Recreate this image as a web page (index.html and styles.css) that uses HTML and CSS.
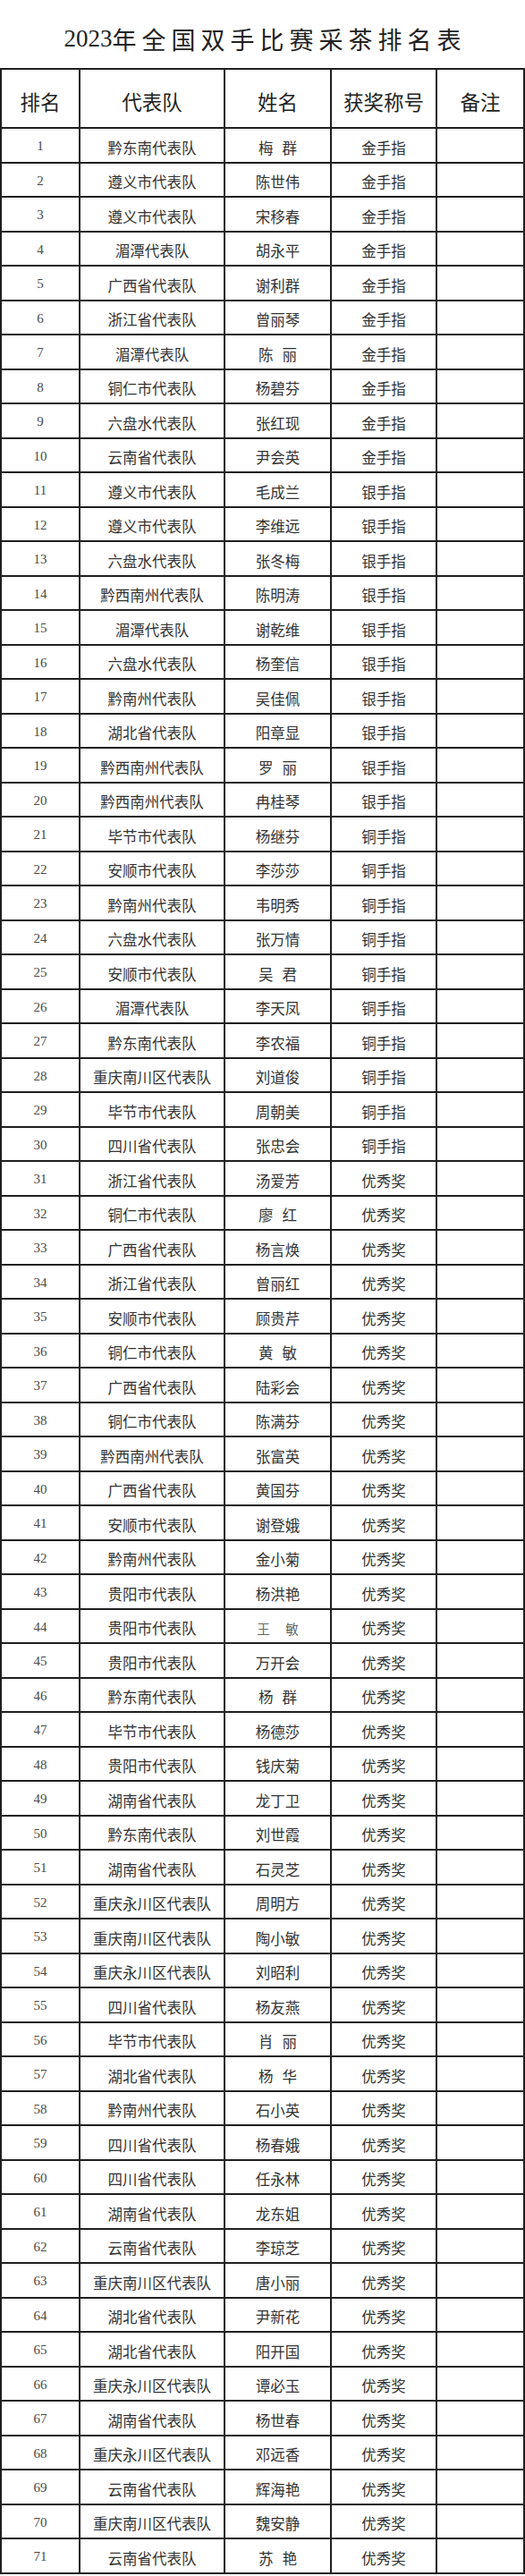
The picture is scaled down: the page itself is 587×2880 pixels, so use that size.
FILE: index.html
```html
<!DOCTYPE html>
<html lang="zh-CN">
<head>
<meta charset="utf-8">
<title>2023年全国双手比赛采茶排名表</title>
<link rel="stylesheet" href="styles.css">
</head>
<body>
<div class="page">
  <h1 class="title"><span class="yr">2023</span>年全国双手比赛采茶排名表</h1>
  <div class="sheet">
    <div class="h">排名</div><div class="h">代表队</div><div class="h">姓名</div><div class="h">获奖称号</div><div class="h">备注</div>

    <div class="n">1</div><div class="c">黔东南代表队</div><div class="c nm">梅 群</div><div class="c">金手指</div><div class="c"></div>
    <div class="n">2</div><div class="c">遵义市代表队</div><div class="c">陈世伟</div><div class="c">金手指</div><div class="c"></div>
    <div class="n">3</div><div class="c">遵义市代表队</div><div class="c">宋移春</div><div class="c">金手指</div><div class="c"></div>
    <div class="n">4</div><div class="c">湄潭代表队</div><div class="c">胡永平</div><div class="c">金手指</div><div class="c"></div>
    <div class="n">5</div><div class="c">广西省代表队</div><div class="c">谢利群</div><div class="c">金手指</div><div class="c"></div>
    <div class="n">6</div><div class="c">浙江省代表队</div><div class="c">曾丽琴</div><div class="c">金手指</div><div class="c"></div>
    <div class="n">7</div><div class="c">湄潭代表队</div><div class="c nm">陈 丽</div><div class="c">金手指</div><div class="c"></div>
    <div class="n">8</div><div class="c">铜仁市代表队</div><div class="c">杨碧芬</div><div class="c">金手指</div><div class="c"></div>
    <div class="n">9</div><div class="c">六盘水代表队</div><div class="c">张红现</div><div class="c">金手指</div><div class="c"></div>
    <div class="n">10</div><div class="c">云南省代表队</div><div class="c">尹会英</div><div class="c">金手指</div><div class="c"></div>
    <div class="n">11</div><div class="c">遵义市代表队</div><div class="c">毛成兰</div><div class="c">银手指</div><div class="c"></div>
    <div class="n">12</div><div class="c">遵义市代表队</div><div class="c">李维远</div><div class="c">银手指</div><div class="c"></div>
    <div class="n">13</div><div class="c">六盘水代表队</div><div class="c">张冬梅</div><div class="c">银手指</div><div class="c"></div>
    <div class="n">14</div><div class="c">黔西南州代表队</div><div class="c">陈明涛</div><div class="c">银手指</div><div class="c"></div>
    <div class="n">15</div><div class="c">湄潭代表队</div><div class="c">谢乾维</div><div class="c">银手指</div><div class="c"></div>
    <div class="n">16</div><div class="c">六盘水代表队</div><div class="c">杨奎信</div><div class="c">银手指</div><div class="c"></div>
    <div class="n">17</div><div class="c">黔南州代表队</div><div class="c">吴佳佩</div><div class="c">银手指</div><div class="c"></div>
    <div class="n">18</div><div class="c">湖北省代表队</div><div class="c">阳章显</div><div class="c">银手指</div><div class="c"></div>
    <div class="n">19</div><div class="c">黔西南州代表队</div><div class="c nm">罗 丽</div><div class="c">银手指</div><div class="c"></div>
    <div class="n">20</div><div class="c">黔西南州代表队</div><div class="c">冉桂琴</div><div class="c">银手指</div><div class="c"></div>
    <div class="n">21</div><div class="c">毕节市代表队</div><div class="c">杨继芬</div><div class="c">铜手指</div><div class="c"></div>
    <div class="n">22</div><div class="c">安顺市代表队</div><div class="c">李莎莎</div><div class="c">铜手指</div><div class="c"></div>
    <div class="n">23</div><div class="c">黔南州代表队</div><div class="c">韦明秀</div><div class="c">铜手指</div><div class="c"></div>
    <div class="n">24</div><div class="c">六盘水代表队</div><div class="c">张万情</div><div class="c">铜手指</div><div class="c"></div>
    <div class="n">25</div><div class="c">安顺市代表队</div><div class="c nm">吴 君</div><div class="c">铜手指</div><div class="c"></div>
    <div class="n">26</div><div class="c">湄潭代表队</div><div class="c">李天凤</div><div class="c">铜手指</div><div class="c"></div>
    <div class="n">27</div><div class="c">黔东南代表队</div><div class="c">李农福</div><div class="c">铜手指</div><div class="c"></div>
    <div class="n">28</div><div class="c">重庆南川区代表队</div><div class="c">刘道俊</div><div class="c">铜手指</div><div class="c"></div>
    <div class="n">29</div><div class="c">毕节市代表队</div><div class="c">周朝美</div><div class="c">铜手指</div><div class="c"></div>
    <div class="n">30</div><div class="c">四川省代表队</div><div class="c">张忠会</div><div class="c">铜手指</div><div class="c"></div>
    <div class="n">31</div><div class="c">浙江省代表队</div><div class="c">汤爱芳</div><div class="c">优秀奖</div><div class="c"></div>
    <div class="n">32</div><div class="c">铜仁市代表队</div><div class="c nm">廖 红</div><div class="c">优秀奖</div><div class="c"></div>
    <div class="n">33</div><div class="c">广西省代表队</div><div class="c">杨言焕</div><div class="c">优秀奖</div><div class="c"></div>
    <div class="n">34</div><div class="c">浙江省代表队</div><div class="c">曾丽红</div><div class="c">优秀奖</div><div class="c"></div>
    <div class="n">35</div><div class="c">安顺市代表队</div><div class="c">顾贵芹</div><div class="c">优秀奖</div><div class="c"></div>
    <div class="n">36</div><div class="c">铜仁市代表队</div><div class="c nm">黄 敏</div><div class="c">优秀奖</div><div class="c"></div>
    <div class="n">37</div><div class="c">广西省代表队</div><div class="c">陆彩会</div><div class="c">优秀奖</div><div class="c"></div>
    <div class="n">38</div><div class="c">铜仁市代表队</div><div class="c">陈满芬</div><div class="c">优秀奖</div><div class="c"></div>
    <div class="n">39</div><div class="c">黔西南州代表队</div><div class="c">张富英</div><div class="c">优秀奖</div><div class="c"></div>
    <div class="n">40</div><div class="c">广西省代表队</div><div class="c">黄国芬</div><div class="c">优秀奖</div><div class="c"></div>
    <div class="n">41</div><div class="c">安顺市代表队</div><div class="c">谢登娥</div><div class="c">优秀奖</div><div class="c"></div>
    <div class="n">42</div><div class="c">黔南州代表队</div><div class="c">金小菊</div><div class="c">优秀奖</div><div class="c"></div>
    <div class="n">43</div><div class="c">贵阳市代表队</div><div class="c">杨洪艳</div><div class="c">优秀奖</div><div class="c"></div>
    <div class="n">44</div><div class="c">贵阳市代表队</div><div class="c nm light">王 敏</div><div class="c">优秀奖</div><div class="c"></div>
    <div class="n">45</div><div class="c">贵阳市代表队</div><div class="c">万开会</div><div class="c">优秀奖</div><div class="c"></div>
    <div class="n">46</div><div class="c">黔东南代表队</div><div class="c nm">杨 群</div><div class="c">优秀奖</div><div class="c"></div>
    <div class="n">47</div><div class="c">毕节市代表队</div><div class="c">杨德莎</div><div class="c">优秀奖</div><div class="c"></div>
    <div class="n">48</div><div class="c">贵阳市代表队</div><div class="c">钱庆菊</div><div class="c">优秀奖</div><div class="c"></div>
    <div class="n">49</div><div class="c">湖南省代表队</div><div class="c">龙丁卫</div><div class="c">优秀奖</div><div class="c"></div>
    <div class="n">50</div><div class="c">黔东南代表队</div><div class="c">刘世霞</div><div class="c">优秀奖</div><div class="c"></div>
    <div class="n">51</div><div class="c">湖南省代表队</div><div class="c">石灵芝</div><div class="c">优秀奖</div><div class="c"></div>
    <div class="n">52</div><div class="c">重庆永川区代表队</div><div class="c">周明方</div><div class="c">优秀奖</div><div class="c"></div>
    <div class="n">53</div><div class="c">重庆南川区代表队</div><div class="c">陶小敏</div><div class="c">优秀奖</div><div class="c"></div>
    <div class="n">54</div><div class="c">重庆永川区代表队</div><div class="c">刘昭利</div><div class="c">优秀奖</div><div class="c"></div>
    <div class="n">55</div><div class="c">四川省代表队</div><div class="c">杨友燕</div><div class="c">优秀奖</div><div class="c"></div>
    <div class="n">56</div><div class="c">毕节市代表队</div><div class="c nm">肖 丽</div><div class="c">优秀奖</div><div class="c"></div>
    <div class="n">57</div><div class="c">湖北省代表队</div><div class="c nm">杨 华</div><div class="c">优秀奖</div><div class="c"></div>
    <div class="n">58</div><div class="c">黔南州代表队</div><div class="c">石小英</div><div class="c">优秀奖</div><div class="c"></div>
    <div class="n">59</div><div class="c">四川省代表队</div><div class="c">杨春娥</div><div class="c">优秀奖</div><div class="c"></div>
    <div class="n">60</div><div class="c">四川省代表队</div><div class="c">任永林</div><div class="c">优秀奖</div><div class="c"></div>
    <div class="n">61</div><div class="c">湖南省代表队</div><div class="c">龙东姐</div><div class="c">优秀奖</div><div class="c"></div>
    <div class="n">62</div><div class="c">云南省代表队</div><div class="c">李琼芝</div><div class="c">优秀奖</div><div class="c"></div>
    <div class="n">63</div><div class="c">重庆南川区代表队</div><div class="c">唐小丽</div><div class="c">优秀奖</div><div class="c"></div>
    <div class="n">64</div><div class="c">湖北省代表队</div><div class="c">尹新花</div><div class="c">优秀奖</div><div class="c"></div>
    <div class="n">65</div><div class="c">湖北省代表队</div><div class="c">阳开国</div><div class="c">优秀奖</div><div class="c"></div>
    <div class="n">66</div><div class="c">重庆永川区代表队</div><div class="c">谭必玉</div><div class="c">优秀奖</div><div class="c"></div>
    <div class="n">67</div><div class="c">湖南省代表队</div><div class="c">杨世春</div><div class="c">优秀奖</div><div class="c"></div>
    <div class="n">68</div><div class="c">重庆永川区代表队</div><div class="c">邓远香</div><div class="c">优秀奖</div><div class="c"></div>
    <div class="n">69</div><div class="c">云南省代表队</div><div class="c">辉海艳</div><div class="c">优秀奖</div><div class="c"></div>
    <div class="n">70</div><div class="c">重庆南川区代表队</div><div class="c">魏安静</div><div class="c">优秀奖</div><div class="c"></div>
    <div class="n">71</div><div class="c">云南省代表队</div><div class="c nm">苏 艳</div><div class="c">优秀奖</div><div class="c"></div>
  </div>
</div>
</body>
</html>
```
FILE: styles.css
```css
html, body {
  margin: 0;
  padding: 0;
  background: #ffffff;
}

.page {
  width: 587px;
  font-family: "Liberation Serif", "Noto Sans CJK SC", serif;
  color: #333333;
}

.title {
  margin: 0;
  height: 76px;
  padding-top: 11px;
  padding-left: 6px;
  box-sizing: border-box;
  display: flex;
  align-items: center;
  justify-content: center;
  font-size: 27px;
  font-weight: normal;
  letter-spacing: 6px;
  color: #222222;
}

.title .yr {
  letter-spacing: 0;
}

.sheet {
  display: grid;
  grid-template-columns: 86px 160px 117px 116px 96px;
  grid-template-rows: 64px;
  grid-auto-rows: 36.5px;
  gap: 2px;
  padding: 2px;
  background: #1f1f1f;
  width: 587px;
  box-sizing: border-box;
}

.sheet > div {
  background: #ffffff;
  display: flex;
  align-items: center;
  justify-content: center;
  white-space: nowrap;
}

.h {
  font-size: 22.5px;
  color: #222222;
  padding-top: 5px;
}

.n {
  font-size: 15px;
  color: #4a4a4a;
  padding-top: 3px;
}

.c {
  font-size: 16.5px;
  color: #333333;
  padding-top: 5px;
}

.nm {
  word-spacing: 6px;
}

.light {
  font-size: 14.5px;
  color: #666666;
  word-spacing: 14px;
}
```
